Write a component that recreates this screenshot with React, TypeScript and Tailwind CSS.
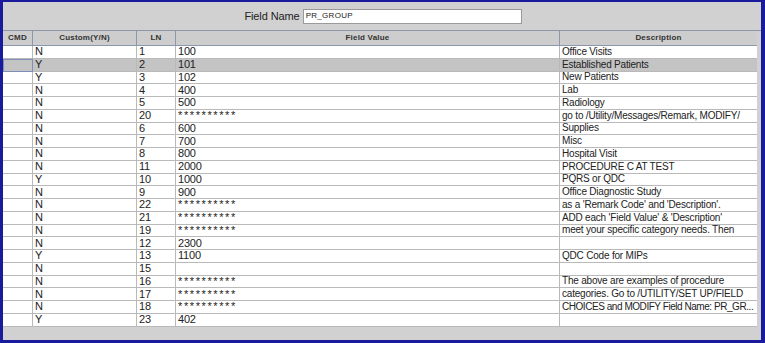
import React from "react";

type Row = { custom: string; ln: string; value: string; desc: string };

const rows: Row[] = [
  { custom: "N", ln: "1", value: "100", desc: "Office Visits" },
  { custom: "Y", ln: "2", value: "101", desc: "Established Patients" },
  { custom: "Y", ln: "3", value: "102", desc: "New Patients" },
  { custom: "N", ln: "4", value: "400", desc: "Lab" },
  { custom: "N", ln: "5", value: "500", desc: "Radiology" },
  { custom: "N", ln: "20", value: "**********", desc: "go to /Utility/Messages/Remark, MODIFY/" },
  { custom: "N", ln: "6", value: "600", desc: "Supplies" },
  { custom: "N", ln: "7", value: "700", desc: "Misc" },
  { custom: "N", ln: "8", value: "800", desc: "Hospital Visit" },
  { custom: "N", ln: "11", value: "2000", desc: "PROCEDURE C AT TEST" },
  { custom: "Y", ln: "10", value: "1000", desc: "PQRS or QDC" },
  { custom: "N", ln: "9", value: "900", desc: "Office Diagnostic Study" },
  { custom: "N", ln: "22", value: "**********", desc: "as a 'Remark Code' and 'Description'." },
  { custom: "N", ln: "21", value: "**********", desc: "ADD each 'Field Value' & 'Description'" },
  { custom: "N", ln: "19", value: "**********", desc: "meet your specific category needs. Then" },
  { custom: "N", ln: "12", value: "2300", desc: "" },
  { custom: "Y", ln: "13", value: "1100", desc: "QDC Code for MIPs" },
  { custom: "N", ln: "15", value: "", desc: "" },
  { custom: "N", ln: "16", value: "**********", desc: "The above are examples of procedure" },
  { custom: "N", ln: "17", value: "**********", desc: "categories. Go to /UTILITY/SET UP/FIELD" },
  { custom: "N", ln: "18", value: "**********", desc: "CHOICES and MODIFY Field Name: PR_GR..." },
  { custom: "Y", ln: "23", value: "402", desc: "" },
];

const cols = "grid grid-cols-[30px_104px_39px_384px_197px]";

export default function App() {
  return (
    <div
      className="h-[343px] w-[765px] bg-[#1a1a9c] pb-[3px] pl-[3px] pr-[4px] pt-[2px]"
      style={{ fontFamily: "'Liberation Sans', Arial, sans-serif" }}
    >
      <div className="flex h-full flex-col bg-[#d1d1d1]">
        <div className="flex h-[29px] items-center justify-center gap-[3px] border-b border-[#8d97ab] pl-[2px]">
          <span className="text-[11px] tracking-[-0.1px] text-[#222]">Field Name</span>
          <div className="flex h-[15px] w-[219px] items-center border border-[#9a9a9a] bg-white px-[2px] text-[8px] tracking-[0.3px] text-[#222]">
            PR_GROUP
          </div>
        </div>

        <div className="mr-[4px] flex flex-col">
          <div className={`${cols} h-[15px] border-b border-[#8d97ab] bg-[#cdcdcd] text-[8px] font-bold tracking-[0.2px] text-[#333]`}>
            <div className="flex items-center justify-center border-r border-[#8d97ab]">CMD</div>
            <div className="flex items-center justify-center border-r border-[#8d97ab]">Custom(Y/N)</div>
            <div className="flex items-center justify-center border-r border-[#8d97ab]">LN</div>
            <div className="flex items-center justify-center border-r border-[#8d97ab]">Field Value</div>
            <div className="flex items-center justify-center">Description</div>
          </div>

          {rows.map((r, i) => {
            const sel = i === 1;
            return (
              <div
                key={i}
                className={`${cols} h-[12.75px] text-[10px] leading-none tracking-[-0.2px] text-[#222] ${sel ? "bg-[#c4c4c4]" : "bg-white"}`}
              >
                <div
                  className={
                    sel
                      ? "border border-[#7f8fb8]"
                      : "border-b border-r border-[#b9b9b9]"
                  }
                />
                <div className="flex items-center overflow-hidden border-b border-r border-[#b9b9b9] pl-[2px] text-[11px] tracking-normal">
                  {r.custom}
                </div>
                <div className="flex items-center overflow-hidden border-b border-r border-[#b9b9b9] pl-[2px] text-[11px] tracking-[-0.2px]">
                  {r.ln}
                </div>
                <div className="flex items-center overflow-hidden whitespace-pre border-b border-r border-[#b9b9b9] pl-[2px] text-[11px] tracking-[-0.2px]">
                  {r.value.startsWith("*") ? (
                    <span className="tracking-[1.6px]">{r.value}</span>
                  ) : (
                    r.value
                  )}
                </div>
                <div
                  className={`flex items-center overflow-hidden whitespace-nowrap border-b border-[#b9b9b9] pl-[2px] ${r.desc.endsWith("...") ? "tracking-[-0.45px]" : ""}`}
                >
                  {r.desc}
                </div>
              </div>
            );
          })}
        </div>
        <div className="flex-1" />
      </div>
    </div>
  );
}
